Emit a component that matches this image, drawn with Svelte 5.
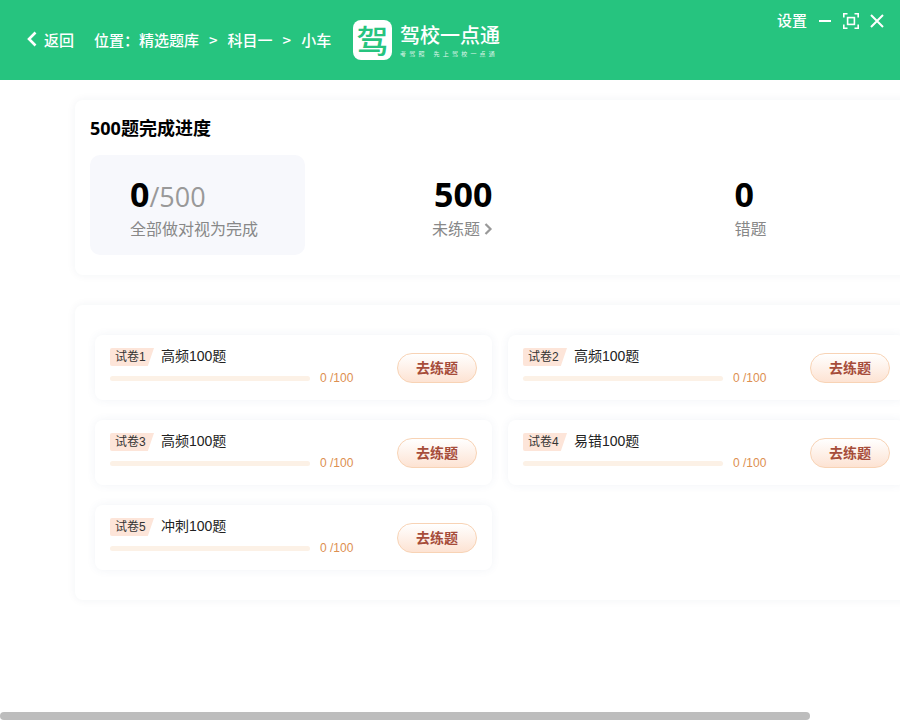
<script>
  const papers = [
    { tag: '试卷1', name: '高频100题' },
    { tag: '试卷2', name: '高频100题' },
    { tag: '试卷3', name: '高频100题' },
    { tag: '试卷4', name: '易错100题' },
    { tag: '试卷5', name: '冲刺100题' }
  ];
</script>

<div class="page">
  <header class="top">
    <div class="back">
      <svg width="10" height="16" viewBox="0 0 10 16"><path d="M8.5 1.5 2 8l6.5 6.5" fill="none" stroke="#fff" stroke-width="2.6"/></svg>
      <span>返回</span>
    </div>
    <nav class="crumbs">
      <span>位置：精选题库</span>
      <span class="sep">&gt;</span>
      <span>科目一</span>
      <span class="sep">&gt;</span>
      <span>小车</span>
    </nav>
    <div class="logo">
      <div class="logo-mark">驾</div>
      <div class="logo-text">
        <div class="logo-name">驾校一点通</div>
        <div class="logo-sub"><span>考驾照</span><span>先上驾校一点通</span></div>
      </div>
    </div>
    <div class="win">
      <span class="settings">设置</span>
      <svg width="12" height="12" viewBox="0 0 12 12"><path d="M0 6h12" stroke="#fff" stroke-width="2"/></svg>
      <svg width="16" height="16" viewBox="0 0 16 16" fill="none" stroke="#fff" stroke-width="1.6">
        <path d="M.8 4.5V.8h3.7M11.5.8h3.7v3.7M15.2 11.5v3.7h-3.7M4.5 15.2H.8v-3.7"/>
        <rect x="4.6" y="4.6" width="6.8" height="6.8"/>
      </svg>
      <svg class="close" width="14" height="14" viewBox="0 0 14 14"><path d="m1 1 12 12M13 1 1 13" stroke="#fff" stroke-width="2"/></svg>
    </div>
  </header>

  <main class="main">
    <div class="content">
      <section class="card progress">
        <h2>500题完成进度</h2>
        <div class="stats">
          <div class="stat-box">
            <div class="num">0<span class="total">/500</span></div>
            <div class="label">全部做对视为完成</div>
          </div>
          <div class="stat">
            <div class="num shifted">500</div>
            <div class="label">未练题
              <svg width="9" height="12" viewBox="0 0 9 12"><path d="m1.5 1 5 5-5 5" fill="none" stroke="#999" stroke-width="2.2"/></svg>
            </div>
          </div>
          <div class="stat">
            <div class="num">0</div>
            <div class="label">错题</div>
          </div>
        </div>
      </section>

      <section class="card papers">
        {#each papers as p}
          <div class="paper">
            <div class="info">
              <div class="title-row">
                <span class="tag">{p.tag}</span>
                <span class="name">{p.name}</span>
              </div>
              <div class="bar-row">
                <div class="bar"></div>
                <span class="count">0 /100</span>
              </div>
            </div>
            <button class="go">去练题</button>
          </div>
        {/each}
      </section>
    </div>
  </main>

  <div class="scrollbar"><div class="thumb"></div></div>
</div>

<style>
  :global(body) {
    background: #fff;
  }

  .page {
    width: 900px;
    height: 720px;
    display: flex;
    flex-direction: column;
    overflow: hidden;
    font-family: "Noto Sans CJK SC", "Liberation Sans", sans-serif;
    color: #000;
  }

  .top {
    height: 80px;
    flex: none;
    background: #26c47f;
    color: #fff;
    display: flex;
    align-items: center;
    padding-left: 27px;
    position: relative;
    font-size: 15px;
    font-weight: 500;
  }

  .back {
    display: flex;
    align-items: center;
    gap: 7px;
    width: 67px;
    margin-top: -2px;
  }

  .crumbs {
    display: flex;
    gap: 10px;
    width: 259px;
    margin-top: -2px;
  }

  .logo {
    display: flex;
    align-items: center;
    gap: 8px;
  }

  .logo-mark {
    width: 39px;
    height: 40px;
    border-radius: 8px;
    background: #fff;
    color: #26c47f;
    font-size: 32px;
    line-height: 39px;
    text-align: center;
  }

  .logo-name {
    font-size: 20px;
    line-height: 24px;
  }

  .logo-sub {
    font-size: 6px;
    line-height: 8px;
    letter-spacing: 3.2px;
    margin-top: 3px;
    display: flex;
    gap: 6px;
    font-weight: 400;
    opacity: 0.85;
  }

  .win {
    position: absolute;
    top: 12px;
    right: 16px;
    display: flex;
    align-items: center;
    gap: 12px;
  }

  .settings {
    font-size: 15px;
    margin-top: -3px;
  }

  .close {
    margin-left: -1px;
  }

  .main {
    flex: 1;
    overflow: hidden;
  }

  .content {
    width: 850px;
    padding: 20px 0 0 75px;
  }

  .card {
    background: #fff;
    border-radius: 8px;
    box-shadow: 0 0 10px rgba(40, 50, 80, 0.06);
  }

  .progress {
    height: 175px;
    box-sizing: border-box;
    padding: 15px;
    margin-bottom: 30px;
  }

  h2 {
    margin: 0 0 14px;
    font-size: 18px;
    line-height: 26px;
    font-weight: 700;
    font-family: "Open Sans", "Noto Sans CJK SC", sans-serif;
  }

  .stats {
    display: grid;
    grid-template-columns: 215px 1fr 1fr;
  }

  .stat-box {
    height: 100px;
    box-sizing: border-box;
    padding: 17px 0 0 40px;
    background: #f7f8fc;
    border-radius: 10px;
  }

  .stat {
    padding: 17px 0 0 127px;
  }

  .num {
    height: 44px;
    font-family: "Open Sans", "Noto Sans CJK SC", sans-serif;
    font-size: 34px;
    font-weight: 700;
    line-height: 44px;
  }

  .shifted {
    margin-left: 2px;
  }

  .total {
    font-size: 27px;
    font-weight: 400;
    color: #999;
  }

  .label {
    font-size: 16px;
    line-height: 24px;
    color: #888;
    white-space: nowrap;
  }

  .papers {
    display: grid;
    grid-template-columns: 397px 397px;
    gap: 20px 16px;
    padding: 30px 20px;
    height: 295px;
    box-sizing: border-box;
    align-content: start;
  }

  .paper {
    height: 65px;
    box-sizing: border-box;
    padding: 0 15px;
    background: #fff;
    border-radius: 8px;
    box-shadow: 0 0 10px rgba(60, 80, 140, 0.07);
    display: flex;
    align-items: center;
    justify-content: space-between;
  }

  .title-row {
    display: flex;
    align-items: center;
    gap: 7px;
    height: 20px;
    margin-bottom: 4px;
    margin-top: -3px;
  }

  .tag {
    width: 44px;
    height: 18px;
    box-sizing: border-box;
    padding-left: 5px;
    background: #fde5d9;
    border-radius: 2px 0 0 2px;
    clip-path: polygon(0 0, 100% 0, 86% 100%, 0 100%);
    font-family: "Liberation Sans", "Noto Sans CJK SC", sans-serif;
    font-size: 12px;
    line-height: 18px;
    color: #333;
  }

  .name {
    font-family: "Liberation Sans", "Noto Sans CJK SC", sans-serif;
    font-size: 14px;
    line-height: 16px;
    margin-top: -3px;
    color: #222;
  }

  .bar-row {
    display: flex;
    align-items: center;
    gap: 10px;
  }

  .bar {
    width: 200px;
    height: 5px;
    margin-top: 1px;
    border-radius: 3px;
    background: #fcf1e6;
  }

  .count {
    font-family: "Liberation Sans", sans-serif;
    font-size: 12px;
    line-height: 14px;
    color: #dd8f50;
  }

  .go {
    width: 80px;
    height: 30px;
    margin: 0;
    padding: 0 0 2px;
    border: 1px solid #f8d3b5;
    border-radius: 15px;
    background: linear-gradient(#fff, #fde3d3);
    color: #a64c3a;
    font-family: "Noto Sans CJK SC", sans-serif;
    font-size: 14px;
    font-weight: 700;
  }

  .scrollbar {
    height: 8px;
    flex: none;
  }

  .thumb {
    width: 810px;
    height: 8px;
    border-radius: 4px;
    background: #bdbdbd;
  }
</style>
